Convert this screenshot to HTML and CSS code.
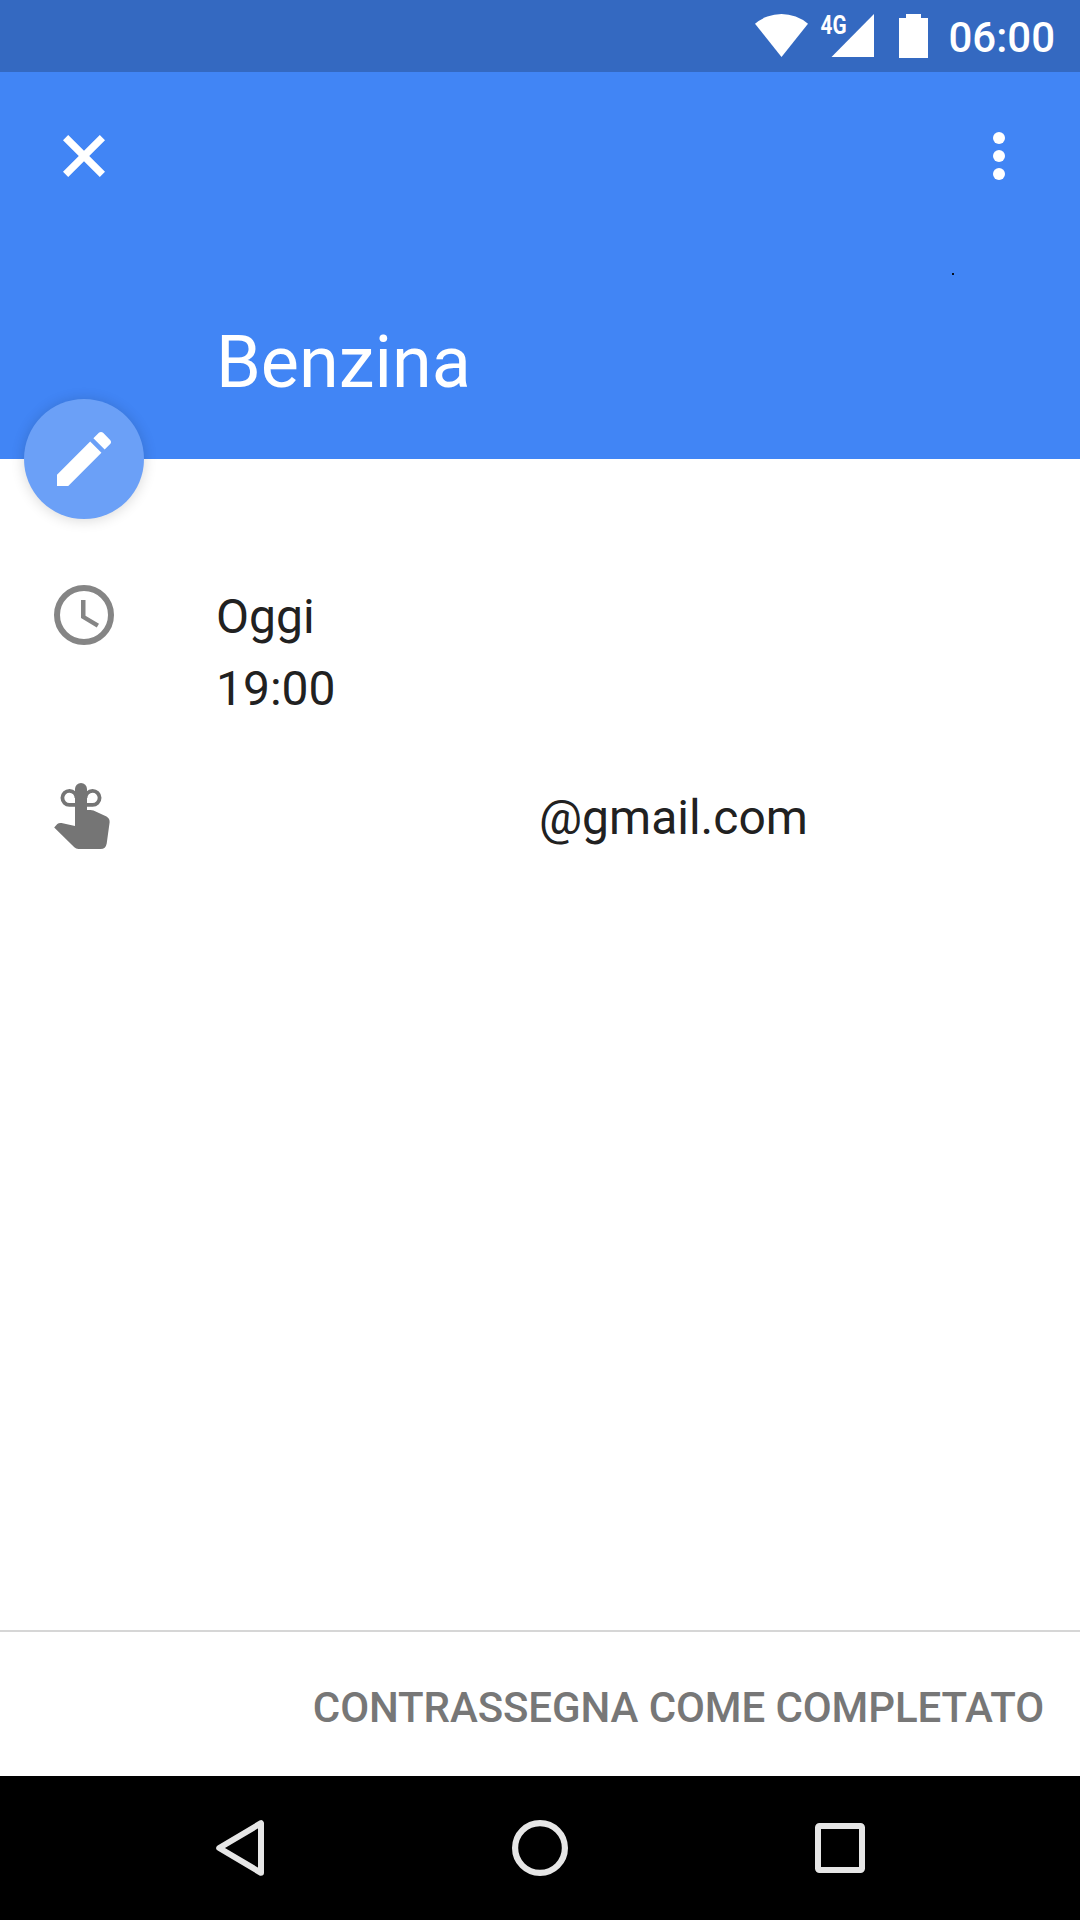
FILE: index.html
```html
<!DOCTYPE html>
<html lang="it">
<head>
<meta charset="utf-8">
<title>Benzina</title>
<link rel="stylesheet" href="styles.css">
</head>
<body>
<div class="screen">
  <div class="status-bar">
    <svg class="status-icons" width="174" height="58" viewBox="755 7 174 58" fill="#fff">
      <path d="M755 23.800A41 41 0 0 1 808 23.800L781.500 57Z"/>
      <text class="network" x="820.500" y="33.500" textLength="26" lengthAdjust="spacingAndGlyphs">4G</text>
      <path d="M831.500 57L874 14V57Z"/>
      <path d="M906 14H921V18H928V58H899V18H906Z"/>
    </svg>
    <span class="clock">06:00</span>
  </div>
  <header class="header">
    <div class="toolbar">
      <svg width="72" height="72" viewBox="0 0 72 72" fill="#fff"><path d="M57 20.200L51.800 15 36 30.800 20.200 15 15 20.200 30.800 36 15 51.800 20.200 57 36 41.200 51.800 57 57 51.800 41.200 36z"/></svg>
      <svg width="72" height="72" viewBox="0 0 24 24" fill="#fff"><circle cx="12" cy="6" r="2"/><circle cx="12" cy="12" r="2"/><circle cx="12" cy="18" r="2"/></svg>
    </div>
    <h1 class="title">Benzina</h1>
    <span class="speck"></span>
    <button class="fab" aria-label="Modifica">
      <svg width="72" height="72" viewBox="0 0 24 24" fill="#fff"><path d="M3 17.250V21h3.750L17.810 9.940l-3.750-3.750L3 17.250zM20.710 7.040c.39-.39.39-1.020 0-1.410l-2.340-2.340c-.39-.39-1.020-.39-1.410 0l-1.830 1.830 3.750 3.750 1.830-1.830z"/></svg>
    </button>
  </header>
  <main class="details">
    <section class="row">
      <svg class="row-icon" width="72" height="72" viewBox="0 0 72 72"><circle cx="36" cy="36" r="27" fill="none" stroke="#858585" stroke-width="6"/><path d="M33 21H37.500V36.750L51 44.760L48.750 48.450L33 39Z" fill="#858585"/></svg>
      <div class="row-text"><div>Oggi</div><div>19:00</div></div>
    </section>
    <section class="row account">
      <svg class="row-icon" width="72" height="72" viewBox="48 780 72 72">
        <path d="M75 804.900H69.500A7.050 7.050 0 1 1 76.500 798M87 804.900H92.500A7.050 7.050 0 1 0 85.500 798" fill="none" stroke="#757575" stroke-width="3.800"/>
        <path d="M75 826V789A6 6 0 0 1 87 789V810H90.500Q92 810 93.500 810.600L106.500 816.500Q110 818.500 109.600 822.500L106.700 843.500Q105.800 849 100.500 849H78.500Q76 849 74.300 847.300L54.200 827.400L57.300 824.100Q59 822.500 61.500 823Z" fill="#757575"/>
      </svg>
      <div class="row-text email">@gmail.com</div>
    </section>
  </main>
  <footer class="action-bar"><button class="complete">CONTRASSEGNA COME COMPLETATO</button></footer>
  <nav class="nav-bar">
    <svg width="60" height="60" viewBox="0 0 60 60" fill="none" stroke="#e6e6e6" stroke-width="6" stroke-linejoin="round"><path d="M9.200 30L51 5.200V54.800Z"/></svg>
    <svg width="60" height="60" viewBox="0 0 60 60" fill="none" stroke="#e6e6e6" stroke-width="6.200"><circle cx="30" cy="30" r="24.900"/></svg>
    <svg width="60" height="60" viewBox="0 0 60 60" fill="none" stroke="#e6e6e6" stroke-width="6"><rect x="8" y="8" width="44" height="44" rx="1.500"/></svg>
  </nav>
</div>
</body>
</html>
```
FILE: styles.css
```css
* { box-sizing: border-box; }
body { margin: 0; font-family: Roboto, sans-serif; }
svg { display: block; flex: none; }
button { border: 0; padding: 0; font: inherit; }
.screen {
  width: 1080px;
  height: 1920px;
  display: flex;
  flex-direction: column;
  background: #fff;
}
.status-bar {
  height: 72px;
  flex: none;
  display: flex;
  align-items: center;
  justify-content: space-between;
  padding: 0 25px 0 755px;
  background: #3469c1;
}
.status-icons { overflow: visible; }
.network { font-size: 26px; font-weight: 700; }
.clock {
  padding-top: 4px;
  color: #fff;
  font-size: 42px;
  font-weight: 500;
  line-height: 68px;
}
.header {
  position: relative;
  height: 387px;
  flex: none;
  display: flex;
  flex-direction: column;
  justify-content: space-between;
  padding: 48px 45px 54px 48px;
  background: #4185f5;
}
.toolbar { display: flex; justify-content: space-between; }
.title {
  margin: 0;
  padding-left: 168px;
  color: #fff;
  font-size: 72px;
  font-weight: 400;
  line-height: 84px;
}
.speck {
  position: absolute;
  left: 952px;
  top: 201px;
  width: 2px;
  height: 2px;
  background: #06101e;
}
.fab {
  position: absolute;
  left: 24px;
  bottom: -60px;
  width: 120px;
  height: 120px;
  display: flex;
  align-items: center;
  justify-content: center;
  border-radius: 50%;
  background: #6ba0f7;
  box-shadow: 0 1px 14px rgba(0, 0, 0, .16);
}
.details {
  flex: 1;
  display: flex;
  flex-direction: column;
  gap: 55px;
  padding: 120px 48px 0;
}
.row { display: flex; gap: 96px; }
.row-text {
  padding-top: 2px;
  color: #212121;
  font-size: 48px;
  line-height: 72px;
}
.email { padding-left: 323px; }
.action-bar {
  height: 146px;
  flex: none;
  display: flex;
  align-items: center;
  justify-content: flex-end;
  padding: 7px 36px 0;
  border-top: 2px solid #d6d6d6;
}
.complete {
  background: none;
  color: #777;
  font-size: 42px;
  font-weight: 500;
  line-height: 60px;
  letter-spacing: -0.1px;
}
.nav-bar {
  height: 144px;
  flex: none;
  display: flex;
  align-items: center;
  justify-content: center;
  gap: 240px;
  background: #000;
}
```
